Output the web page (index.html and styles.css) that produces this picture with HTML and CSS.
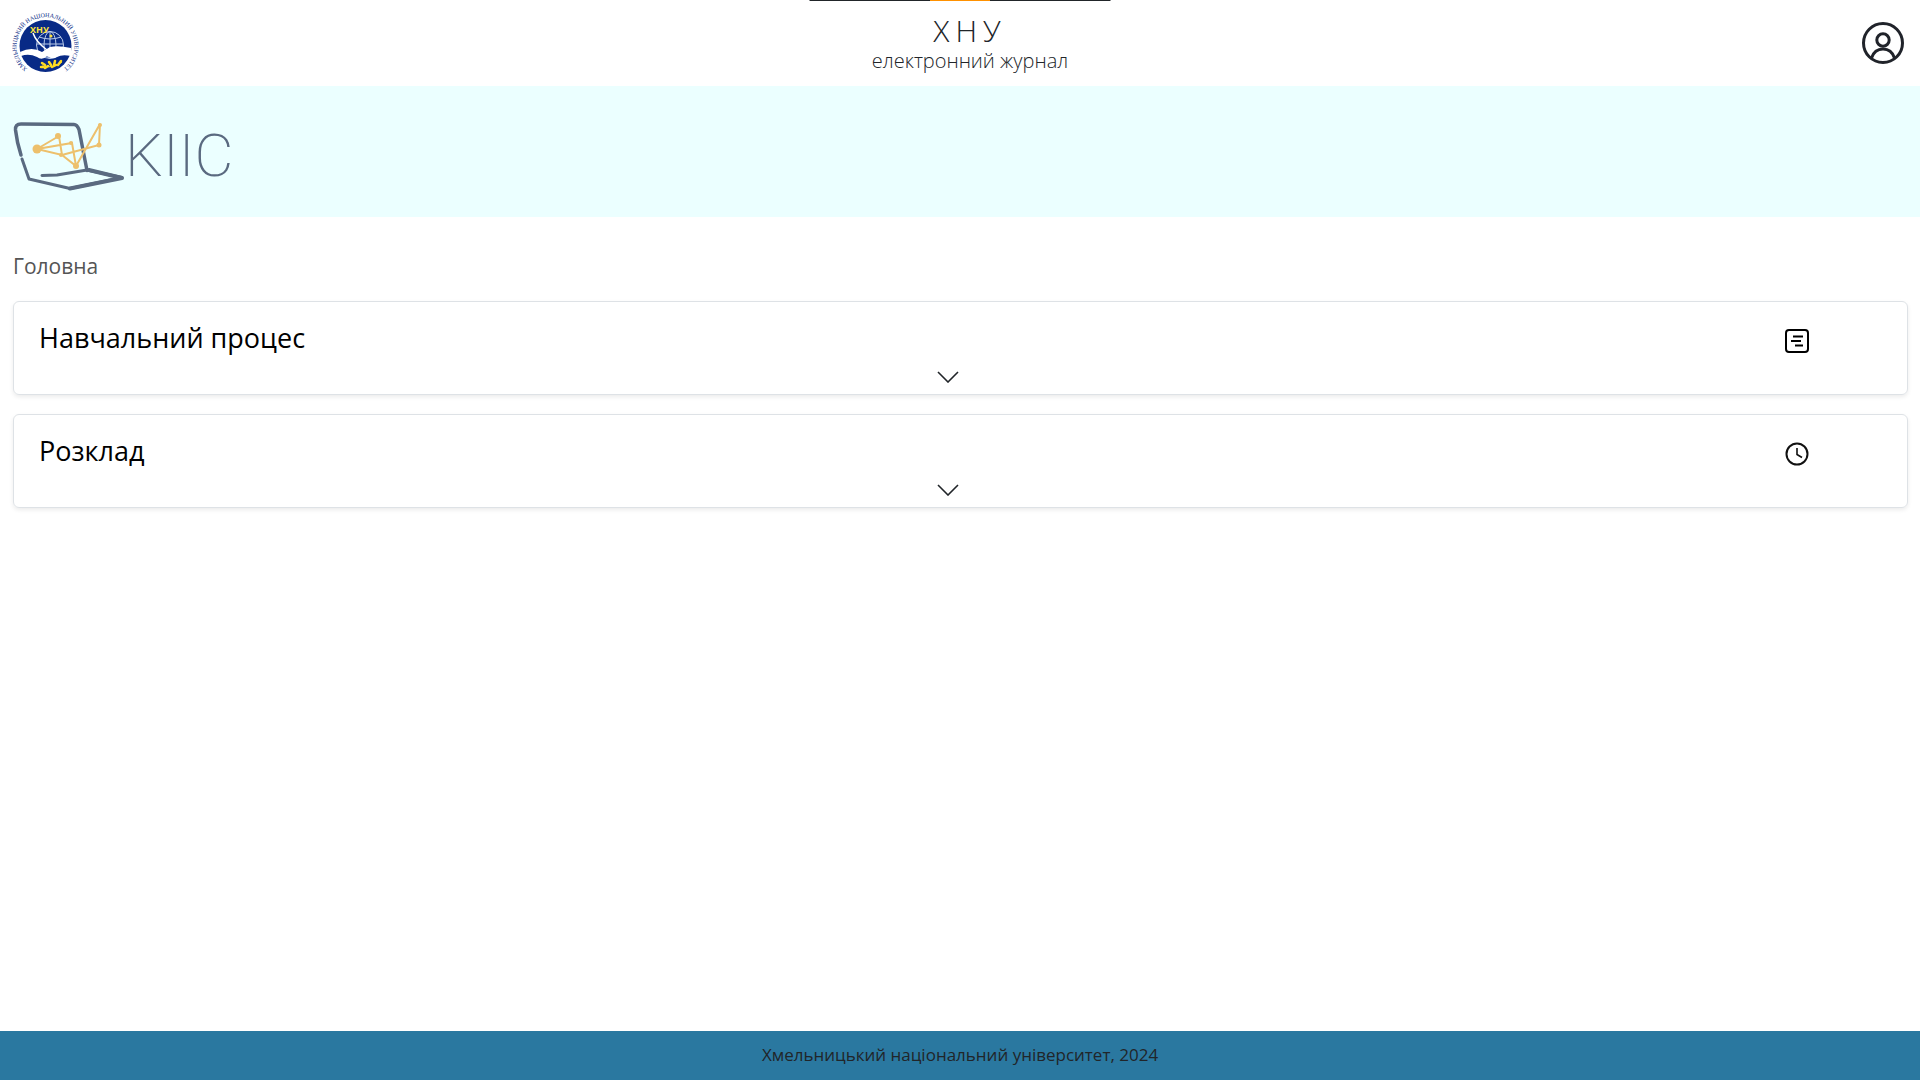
FILE: index.html
```html
<!DOCTYPE html>
<html lang="uk">
<head>
  <meta charset="utf-8">
  <meta name="viewport" content="width=device-width, initial-scale=1">
  <title>ХНУ електронний журнал</title>
  <link rel="stylesheet" href="styles.css">
</head>
<body>
  <div class="top-strip"></div>
  <header class="header">
    <a class="seal" href="#" aria-label="Хмельницький національний університет">
      <svg viewBox="0 0 68 68" width="68" height="68">
        <defs>
          <path id="ring" d="M20.500 62.500A29 29 0 1 1 48.500 62.500"/>
        </defs>
        <circle cx="34.500" cy="37" r="26" fill="#082a86"/>
        <g fill="none" stroke="#b9cbe9" stroke-width="1">
          <circle cx="39" cy="36" r="13.500"/>
          <ellipse cx="39" cy="36" rx="6" ry="13.500"/>
          <path d="M39 22v20M26 35h26M28 28q11 4 22 0"/>
        </g>
        <path d="M9 43q12-6 22 0l8-5q8-2 21 1v8q-9-2-14 1-5 3-10-1-5 5-10 1-8-4-16-1z" fill="#fff"/>
        <path d="M22 24q3 9 14 17" fill="none" stroke="#fff" stroke-width="1.500"/>
        <circle cx="40" cy="27" r="1.5" fill="#ffe23b"/>
        <g fill="none" stroke="#ffdc22" stroke-linecap="round" stroke-width="2.500">
          <path d="M31 54l3 2M34 59l3-2M38 53l2 3M41 58l4-2M44 52l-1 4M50 52l-3 4M32 58l-2 0"/>
        </g>
        <path d="M31 57q11 3 20-4" fill="none" stroke="#ffdc22"/>
        <text class="seal-name" x="19" y="24">ХНУ</text>
        <text class="seal-ring"><textPath href="#ring" startOffset="50%">ХМЕЛЬНИЦЬКИЙ НАЦІОНАЛЬНИЙ УНІВЕРСИТЕТ</textPath></text>
      </svg>
    </a>
    <div class="brand">
      <h1 class="brand-name">ХНУ</h1>
      <p class="brand-text">електронний журнал</p>
    </div>
    <button class="profile" type="button" aria-label="Профіль">
      <svg viewBox="0 0 44 44" width="44" height="44" fill="none" stroke="#20232a" stroke-width="3">
        <circle cx="22" cy="22" r="19.5"/>
        <circle cx="22" cy="19" r="6.2"/>
        <path d="M10.500 37q3-9 11.500-9t11.500 9"/>
      </svg>
    </button>
  </header>

  <section class="banner">
    <svg viewBox="0 0 220 70" width="220" height="70" role="img" aria-label="KIIC">
      <g fill="none" stroke="#5a6a80" stroke-linecap="round" stroke-linejoin="round" stroke-width="3">
        <path d="M8 34Q4 22 2.500 9 2 3 8 3L61 3.500q3 0 5 5l8 41" stroke-width="3.500"/>
        <path d="M9 38l7 20 41 9.500 52-11L74 49l-30 5-15 .5"/>
        <path d="M57 67.500l52-10.500M76 49l33 8" stroke-width="4"/>
      </g>
      <g fill="none" stroke="#edc06c" stroke-width="2">
        <path d="M24 28l22-13 3 19-25-6 35-6 4 23-14-11 37-10 1-21-24 42"/>
      </g>
      <g fill="#edc06c">
        <circle cx="24" cy="28" r="4.500"/>
        <circle cx="45" cy="15" r="3"/>
        <circle cx="58" cy="22" r="2"/>
        <circle cx="48" cy="34" r="2"/>
        <circle cx="63" cy="45" r="3"/>
        <circle cx="86" cy="24" r="2.500"/>
        <circle cx="87" cy="4" r="2"/>
      </g>
      <text class="logo-text" x="112" y="55">KIIC</text>
    </svg>
  </section>

  <main class="main">
    <nav aria-label="Навігація"><a class="crumb" href="#">Головна</a></nav>

    <section class="card">
      <div class="card-head">
        <h2 class="card-title">Навчальний процес</h2>
        <svg class="card-icon" viewBox="0 0 24 24" width="24" height="24" fill="none" stroke="#000" stroke-width="2">
          <rect x="1" y="1" width="22" height="22" rx="3"/>
          <path d="M8 7.500h10M6 12h10M10 16.500h8"/>
        </svg>
      </div>
      <button class="toggle" type="button" aria-label="Розгорнути: Навчальний процес">
        <svg viewBox="0 0 22 12" width="22" height="12" fill="none" stroke="#212529" stroke-width="1.600"><path d="M1 1l10 10L21 1"/></svg>
      </button>
    </section>

    <section class="card">
      <div class="card-head">
        <h2 class="card-title">Розклад</h2>
        <svg class="card-icon" viewBox="0 0 24 24" width="24" height="24" fill="none" stroke="#111" stroke-width="2">
          <circle cx="12" cy="12" r="10.500"/>
          <path d="M12 6v6.500l5 3" stroke-width="1.600"/>
        </svg>
      </div>
      <button class="toggle" type="button" aria-label="Розгорнути: Розклад">
        <svg viewBox="0 0 22 12" width="22" height="12" fill="none" stroke="#212529" stroke-width="1.600"><path d="M1 1l10 10L21 1"/></svg>
      </button>
    </section>
  </main>

  <footer class="footer">Хмельницький національний університет, 2024</footer>
</body>
</html>
```
FILE: styles.css
```css
* {
  box-sizing: border-box;
}

body {
  margin: 0;
  min-height: 100vh;
  display: flex;
  flex-direction: column;
  background: #fff;
  color: #212529;
  font-family: "Open Sans", "Noto Sans", sans-serif;
}

h1, h2, p {
  margin: 0;
}

svg {
  display: block;
}

button {
  padding: 0;
  border: 0;
  background: none;
  cursor: pointer;
}

.top-strip {
  position: absolute;
  top: 0;
  left: 50%;
  width: 301px;
  height: 1px;
  transform: translateX(-50%);
  background: linear-gradient(90deg, #212529 40%, #ff9100 40% 60%, #212529 60%);
}

.header {
  display: flex;
  justify-content: space-between;
  align-items: center;
  height: 86px;
  padding: 0 15px 0 11px;
}

.seal-name {
  font: bold 9px "Open Sans", sans-serif;
  fill: #ffe23b;
}

.seal-ring {
  font: 6px "Liberation Serif", serif;
  fill: #082a86;
  text-anchor: middle;
}

.brand {
  padding-top: 2px;
  text-align: center;
}

.brand-name {
  font-size: 30px;
  font-weight: 300;
  line-height: 34px;
  letter-spacing: 6px;
}

.brand-text {
  font-size: 20px;
  font-weight: 300;
  line-height: 26px;
}

.banner {
  padding: 35px 13px 26px;
  background: #ebffff;
}

.logo-text {
  font: 200 60px Roboto, sans-serif;
  fill: #5a6a80;
}

.main {
  flex: 1;
  display: flex;
  flex-direction: column;
  gap: 19px;
  padding: 33px 12px 19px 13px;
}

.crumb {
  display: block;
  color: #555;
  font-size: 21px;
  line-height: 32px;
  text-decoration: none;
}

.card {
  display: flex;
  flex-direction: column;
  gap: 14px;
  padding: 17px 25px 11px;
  border: 1px solid #dee2e6;
  border-radius: 6px;
  box-shadow: 0 2px 4px rgba(0, 0, 0, 0.08);
}

.card-head {
  display: flex;
  justify-content: space-between;
  align-items: flex-start;
  padding-right: 73px;
}

.card-icon {
  margin-top: 10px;
}

.card-title {
  color: #000;
  font-size: 27px;
  font-weight: 400;
  line-height: 38px;
}

.toggle {
  align-self: center;
  margin-right: 26px;
}

.footer {
  background: #2a78a0;
  font-size: 17px;
  line-height: 48px;
  padding-bottom: 1px;
  text-align: center;
}
```
